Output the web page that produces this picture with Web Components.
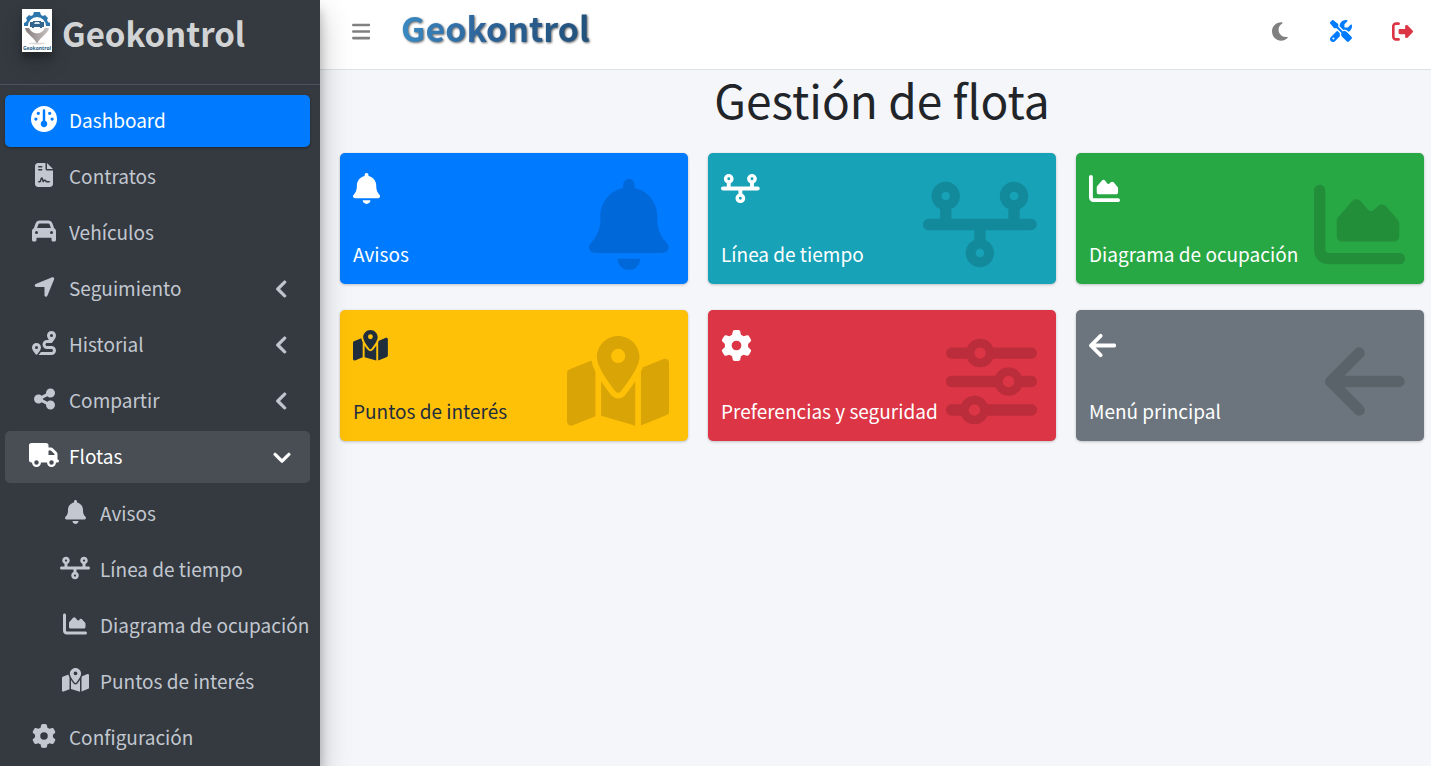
<!DOCTYPE html>
<html lang="es">
<head>
<meta charset="utf-8">
<meta name="viewport" content="width=device-width, initial-scale=1">
<title>Geokontrol - Gestión de flota</title>
<style>
  html, body { margin: 0; }
  body {
    font-family: "Source Sans Pro", "Noto Sans CJK SC", "Noto Sans", sans-serif;
    font-size: 19px;
    line-height: 30px;
    color: #212529;
    background: #f4f6f9;
  }
</style>
</head>
<body>
<geo-app>
  <geo-sidebar slot="sidebar">
    <geo-nav-item icon="gauge" active>Dashboard</geo-nav-item>
    <geo-nav-item icon="contract">Contratos</geo-nav-item>
    <geo-nav-item icon="car">Vehículos</geo-nav-item>
    <geo-nav-item icon="arrow" tree>Seguimiento</geo-nav-item>
    <geo-nav-item icon="route" tree>Historial</geo-nav-item>
    <geo-nav-item icon="share" tree>Compartir</geo-nav-item>
    <geo-nav-item icon="truck" tree open>Flotas
      <geo-nav-item slot="children" icon="bell" nested>Avisos</geo-nav-item>
      <geo-nav-item slot="children" icon="timeline" nested>Línea de tiempo</geo-nav-item>
      <geo-nav-item slot="children" icon="chart" nested>Diagrama de ocupación</geo-nav-item>
      <geo-nav-item slot="children" icon="map" nested>Puntos de interés</geo-nav-item>
    </geo-nav-item>
    <geo-nav-item icon="gear">Configuración</geo-nav-item>
  </geo-sidebar>
  <geo-navbar slot="navbar"></geo-navbar>
  <geo-dashboard>
    <span slot="title">Gestión de flota</span>
    <geo-card color="primary" icon="bell">Avisos</geo-card>
    <geo-card color="info" icon="timeline">Línea de tiempo</geo-card>
    <geo-card color="success" icon="chart">Diagrama de ocupación</geo-card>
    <geo-card color="warning" icon="map">Puntos de interés</geo-card>
    <geo-card color="danger" icon="gear" backdrop="sliders">Preferencias y seguridad</geo-card>
    <geo-card color="secondary" icon="back">Menú principal</geo-card>
  </geo-dashboard>
</geo-app>

<script>
const ICONS = {
  bell: [448, "M224 0c-17.7 0-32 14.3-32 32V51.2C119 66 64 130.6 64 208v18.8c0 47-17.3 92.4-48.5 127.6l-7.4 8.3c-8.4 9.4-10.4 22.9-5.3 34.4S19.4 416 32 416H416c12.6 0 24-7.4 29.2-18.9s3.1-25-5.3-34.4l-7.4-8.3C401.3 319.2 384 273.9 384 226.8V208c0-77.4-55-142-128-156.8V32c0-17.7-14.3-32-32-32zm45.3 493.3c12-12 18.7-28.3 18.7-45.3H224 160c0 17 6.7 33.3 18.7 45.3s28.3 18.7 45.3 18.7s33.3-6.7 45.3-18.7z"],
  timeline: [640, "M128 72a24 24 0 1 1 0 48 24 24 0 1 1 0-48zm32 97.3c28.3-12.3 48-40.5 48-73.3c0-44.2-35.8-80-80-80S48 51.8 48 96c0 32.8 19.7 61 48 73.3V224H32c-17.7 0-32 14.3-32 32s14.3 32 32 32H288v54.7c-28.3 12.3-48 40.5-48 73.3c0 44.2 35.8 80 80 80s80-35.8 80-80c0-32.8-19.7-61-48-73.3V288H608c17.7 0 32-14.3 32-32s-14.3-32-32-32H544V169.3c28.3-12.3 48-40.5 48-73.3c0-44.2-35.8-80-80-80s-80 35.8-80 80c0 32.8 19.7 61 48 73.3V224H160V169.3zM488 96a24 24 0 1 1 48 0 24 24 0 1 1 -48 0zM320 392a24 24 0 1 1 0 48 24 24 0 1 1 0-48z"],
  chart: [512, "M64 64c0-17.7-14.3-32-32-32S0 46.3 0 64V400c0 44.2 35.8 80 80 80H480c17.7 0 32-14.3 32-32s-14.3-32-32-32H80c-8.8 0-16-7.2-16-16V64zm96 288H448c17.7 0 32-14.3 32-32V251.8c0-7.6-2.7-15-7.7-20.8l-65.8-76.8c-12.1-14.2-33.7-15-46.9-1.8l-21 21c-10 10-26.4 9.2-35.4-1.6l-39.2-47c-12.6-15.1-35.7-15.4-48.7-.6L135.9 215c-5.1 5.8-7.9 13.3-7.9 21.1v84c0 17.7 14.3 32 32 32z"],
  map: [576, "M408 120c0 54.6-73.1 151.9-105.2 192c-7.7 9.6-22 9.6-29.6 0C241.1 271.9 168 174.6 168 120C168 53.7 221.7 0 288 0s120 53.7 120 120zm8 80.4c3.5-6.9 6.7-13.8 9.6-20.6c.5-1.2 1-2.5 1.5-3.7l116-46.4C558.9 123.4 576 135 576 152V422.8c0 9.8-6 18.6-15.1 22.3L416 503V200.4zM137.6 138.3c2.4 14.1 7.2 28.3 12.8 41.5c2.9 6.8 6.1 13.7 9.6 20.6V451.8L32.9 502.7C17.1 509 0 497.4 0 480.4V209.6c0-9.8 6-18.6 15.1-22.3l122.6-49zM327.8 332c13.9-17.4 35.7-45.7 56.2-77V504.3L192 449.4V255c20.5 31.3 42.3 59.6 56.2 77c20.5 25.6 59.1 25.6 79.6 0zM288 152a40 40 0 1 0 0-80 40 40 0 1 0 0 80z"],
  gear: [512, "M495.9 166.6c3.2 8.7 .5 18.4-6.4 24.6l-43.3 39.4c1.1 8.3 1.7 16.8 1.7 25.4s-.6 17.1-1.7 25.4l43.3 39.4c6.9 6.2 9.6 15.9 6.4 24.6c-4.4 11.9-9.7 23.3-15.8 34.3l-4.7 8.1c-6.6 11-14 21.4-22.1 31.2c-5.9 7.2-15.7 9.6-24.5 6.8l-55.7-17.7c-13.4 10.3-28.2 18.9-44 25.4l-12.5 57.1c-2 9.1-9 16.3-18.2 17.8c-13.8 2.3-28 3.5-42.5 3.5s-28.7-1.2-42.5-3.5c-9.2-1.5-16.2-8.7-18.2-17.8l-12.5-57.1c-15.8-6.5-30.6-15.1-44-25.4L83.1 425.9c-8.8 2.8-18.6 .3-24.5-6.8c-8.1-9.8-15.5-20.2-22.1-31.2l-4.7-8.1c-6.1-11-11.4-22.4-15.8-34.3c-3.2-8.7-.5-18.4 6.4-24.6l43.3-39.4C64.6 273.1 64 264.6 64 256s.6-17.1 1.7-25.4L22.4 191.2c-6.9-6.2-9.6-15.9-6.4-24.6c4.4-11.9 9.7-23.3 15.8-34.3l4.7-8.1c6.6-11 14-21.4 22.1-31.2c5.9-7.2 15.7-9.6 24.5-6.8l55.7 17.7c13.4-10.3 28.2-18.9 44-25.4l12.5-57.1c2-9.1 9-16.3 18.2-17.8C227.3 1.2 241.5 0 256 0s28.7 1.2 42.5 3.5c9.2 1.5 16.2 8.7 18.2 17.8l12.5 57.1c15.8 6.5 30.6 15.1 44 25.4l55.7-17.7c8.8-2.8 18.6-.3 24.5 6.8c8.1 9.8 15.5 20.2 22.1 31.2l4.7 8.1c6.1 11 11.4 22.4 15.8 34.3zM256 336a80 80 0 1 0 0-160 80 80 0 1 0 0 160z"],
  sliders: [512, "M0 416c0 17.7 14.3 32 32 32l54.7 0c12.3 28.3 40.5 48 73.3 48s61-19.7 73.3-48L480 448c17.7 0 32-14.3 32-32s-14.3-32-32-32l-246.7 0c-12.3-28.3-40.5-48-73.3-48s-61 19.7-73.3 48L32 384c-17.7 0-32 14.3-32 32zm128 0a32 32 0 1 1 64 0 32 32 0 1 1 -64 0zM320 256a32 32 0 1 1 64 0 32 32 0 1 1 -64 0zm32-80c-32.8 0-61 19.7-73.3 48L32 224c-17.7 0-32 14.3-32 32s14.3 32 32 32l246.7 0c12.3 28.3 40.5 48 73.3 48s61-19.7 73.3-48l54.7 0c17.7 0 32-14.3 32-32s-14.3-32-32-32l-54.7 0c-12.3-28.3-40.5-48-73.3-48zM192 128a32 32 0 1 1 0-64 32 32 0 1 1 0 64zm73.3-64C253 35.7 224.8 16 192 16s-61 19.7-73.3 48L32 64C14.3 64 0 78.3 0 96s14.3 32 32 32l86.7 0c12.3 28.3 40.5 48 73.3 48s61-19.7 73.3-48L480 128c17.7 0 32-14.3 32-32s-14.3-32-32-32L265.3 64z"],
  back: [448, "M9.4 233.4c-12.5 12.5-12.5 32.8 0 45.3l160 160c12.5 12.5 32.8 12.5 45.3 0s12.5-32.8 0-45.3L109.2 288 416 288c17.7 0 32-14.3 32-32s-14.3-32-32-32l-306.7 0L214.6 118.6c12.5-12.5 12.5-32.8 0-45.3s-32.8-12.5-45.3 0l-160 160z"],
  gauge: [512, "M0 256a256 256 0 1 1 512 0A256 256 0 1 1 0 256zm320 96c0-26.9-16.5-49.9-40-59.3V88c0-13.3-10.7-24-24-24s-24 10.7-24 24V292.7c-23.5 9.5-40 32.5-40 59.3c0 35.3 28.7 64 64 64s64-28.7 64-64zM144 176a32 32 0 1 0 0-64 32 32 0 1 0 0 64zm-16 80a32 32 0 1 0 -64 0 32 32 0 1 0 64 0zm288 32a32 32 0 1 0 0-64 32 32 0 1 0 0 64zM400 144a32 32 0 1 0 -64 0 32 32 0 1 0 64 0z"],
  contract: [384, "M64 0C28.7 0 0 28.7 0 64V448c0 35.3 28.7 64 64 64H320c35.3 0 64-28.7 64-64V160H256c-17.7 0-32-14.3-32-32V0H64zM256 0V128H384L256 0zM80 64h64c8.8 0 16 7.2 16 16s-7.2 16-16 16H80c-8.8 0-16-7.2-16-16s7.2-16 16-16zm0 64h64c8.8 0 16 7.2 16 16s-7.2 16-16 16H80c-8.8 0-16-7.2-16-16s7.2-16 16-16zm54.2 253.8c-6.1 20.3-24.8 34.2-46 34.2H80c-8.8 0-16-7.2-16-16s7.2-16 16-16h8.2c7.1 0 13.3-4.6 15.3-11.4l14.9-49.5c3.4-11.3 13.8-19.1 25.6-19.1s22.2 7.7 25.6 19.1l11.6 38.6c7.4-6.2 16.8-9.7 26.8-9.7c15.9 0 30.4 9 37.5 23.2l4.4 8.8H304c8.8 0 16 7.2 16 16s-7.2 16-16 16H240c-6.1 0-11.6-3.4-14.3-8.8l-8.8-17.7c-1.7-3.4-5.1-5.5-8.8-5.5s-7.2 2.1-8.8 5.5l-8.8 17.7c-2.9 5.9-9.2 9.4-15.7 8.8s-12.1-5.1-13.9-11.3L144 349l-9.8 32.8z"],
  car: [512, "M135.2 117.4L109.1 192H402.9l-26.1-74.6C372.3 104.6 360.2 96 346.6 96H165.4c-13.6 0-25.7 8.6-30.2 21.4zM39.6 196.8L74.8 96.3C88.3 57.8 124.6 32 165.4 32H346.6c40.8 0 77.1 25.8 90.6 64.3l35.2 100.5c23.2 9.6 39.6 32.5 39.6 59.2V400v48c0 17.7-14.3 32-32 32H448c-17.7 0-32-14.3-32-32V400H96v48c0 17.7-14.3 32-32 32H32c-17.7 0-32-14.3-32-32V400 256c0-26.7 16.4-49.6 39.6-59.2zM128 288a32 32 0 1 0 -64 0 32 32 0 1 0 64 0zm288 32a32 32 0 1 0 0-64 32 32 0 1 0 0 64z"],
  arrow: [448, "M429.6 92.1c4.9-11.9 2.1-25.6-7-34.7s-22.8-11.9-34.7-7l-352 144c-14.2 5.8-22.2 20.8-19.3 35.8s16.1 25.8 31.4 25.8H224V432c0 15.3 10.8 28.4 25.8 31.4s30-5.1 35.8-19.3l144-352z"],
  route: [512, "M512 96c0 50.2-59.1 125.1-84.6 155c-3.8 4.4-9.4 6.1-14.5 5H320c-17.7 0-32 14.3-32 32s14.3 32 32 32h96c53 0 96 43 96 96s-43 96-96 96H139.6c8.7-9.9 19.3-22.6 30-36.8c6.3-8.4 12.8-17.6 19-27.2H416c17.7 0 32-14.3 32-32s-14.3-32-32-32H320c-53 0-96-43-96-96s43-96 96-96h39.8c-21-31.5-39.8-67.7-39.8-96c0-53 43-96 96-96s96 43 96 96zM117.1 489.1c-3.8 4.3-7.2 8.1-10.1 11.3l-1.8 2-.2-.2c-6 4.6-14.6 4-20-1.8C59.8 473 0 402.5 0 352c0-53 43-96 96-96s96 43 96 96c0 30-21.1 67-43.5 97.9c-10.7 14.7-21.7 28-30.8 38.5l-.6 .7zM128 352a32 32 0 1 0 -64 0 32 32 0 1 0 64 0zM416 128a32 32 0 1 0 0-64 32 32 0 1 0 0 64z"],
  share: [448, "M352 224c53 0 96-43 96-96s-43-96-96-96s-96 43-96 96c0 4 .2 8 .7 11.9l-94.1 47C145.4 170.2 121.9 160 96 160c-53 0-96 43-96 96s43 96 96 96c25.9 0 49.4-10.2 66.6-26.9l94.1 47c-.5 3.9-.7 7.8-.7 11.9c0 53 43 96 96 96s96-43 96-96s-43-96-96-96c-25.9 0-49.4 10.2-66.6 26.9l-94.1-47c.5-3.9 .7-7.8 .7-11.9s-.2-8-.7-11.9l94.1-47C302.6 213.8 326.1 224 352 224z"],
  truck: [640, "M48 0C21.5 0 0 21.5 0 48V368c0 26.5 21.5 48 48 48H64c0 53 43 96 96 96s96-43 96-96H384c0 53 43 96 96 96s96-43 96-96h32c17.7 0 32-14.3 32-32s-14.3-32-32-32V288 256 237.3c0-17-6.7-33.3-18.7-45.3L512 114.7c-12-12-28.3-18.7-45.3-18.7H416V48c0-26.5-21.5-48-48-48H48zM416 160h50.7L544 237.3V256H416V160zM112 416a48 48 0 1 1 96 0 48 48 0 1 1 -96 0zm368-48a48 48 0 1 1 0 96 48 48 0 1 1 0-96z"],
  angle: [320, "M41.4 233.4c-12.5 12.5-12.5 32.8 0 45.3l160 160c12.5 12.5 32.8 12.5 45.3 0s12.5-32.8 0-45.3L109.3 256 246.6 118.6c12.5-12.5 12.5-32.8 0-45.3s-32.8-12.5-45.3 0l-160 160z"],
  moon: [384, "M223.5 32C100 32 0 132.3 0 256S100 480 223.5 480c60.6 0 115.5-24.2 155.8-63.4c5-4.9 6.3-12.5 3.1-18.7s-10.1-9.7-17-8.5c-9.8 1.7-19.8 2.6-30.1 2.6c-96.9 0-175.5-78.8-175.5-176c0-65.8 36-123.1 89.3-153.3c6.1-3.5 9.2-10.5 7.7-17.3s-7.3-11.9-14.3-12.5c-6.3-.5-12.6-.8-19-.8z"],
  tools: [512, "M78.6 5C69.1-2.4 55.6-1.5 47 7L7 47c-8.5 8.5-9.4 22-2.1 31.6l80 104c4.5 5.9 11.6 9.4 19 9.4h54.1l109 109c-14.7 29-10 65.4 14.3 89.6l112 112c12.5 12.5 32.8 12.5 45.3 0l64-64c12.5-12.5 12.5-32.8 0-45.3l-112-112c-24.2-24.2-60.6-29-89.6-14.3l-109-109V104c0-7.5-3.5-14.5-9.4-19L78.6 5zM19.9 396.1C7.2 408.8 0 426.1 0 444.1C0 481.6 30.4 512 67.9 512c18 0 35.3-7.2 48-19.9L233.7 374.3c-7.8-20.9-9-43.6-3.6-65.1l-61.7-61.7L19.9 396.1zM512 144c0-10.5-1.1-20.7-3.2-30.5c-2.4-11.2-16.1-14.1-24.2-6l-63.9 63.9c-3 3-7.1 4.7-11.3 4.7H352c-8.8 0-16-7.2-16-16V102.6c0-4.2 1.7-8.3 4.7-11.3l63.9-63.9c8.1-8.1 5.2-21.8-6-24.2C388.7 1.1 378.5 0 368 0C288.5 0 224 64.5 224 144l0 .8 85.3 85.3c36-9.1 75.8 .5 104 28.7L429 274.5c49-23 83-72.8 83-130.5zM56 432a24 24 0 1 1 48 0 24 24 0 1 1 -48 0z"],
  logout: [512, "M377.9 105.9L500.7 228.7c7.2 7.2 11.3 17.1 11.3 27.3s-4.1 20.1-11.3 27.3L377.9 406.1c-6.4 6.4-15 9.9-24 9.9c-18.7 0-33.9-15.2-33.9-33.9l0-62.1-128 0c-17.7 0-32-14.3-32-32l0-64c0-17.7 14.3-32 32-32l128 0 0-62.1c0-18.7 15.2-33.9 33.9-33.9c9 0 17.6 3.6 24 9.9zM160 96L96 96c-17.7 0-32 14.3-32 32l0 256c0 17.7 14.3 32 32 32l64 0c17.7 0 32 14.3 32 32s-14.3 32-32 32l-64 0c-53 0-96-43-96-96L0 128C0 75 43 32 96 32l64 0c17.7 0 32 14.3 32 32s-14.3 32-32 32z"],
  bars: [448, "M0 96C0 78.3 14.3 64 32 64H416c17.7 0 32 14.3 32 32s-14.3 32-32 32H32C14.3 128 0 113.7 0 96zM0 256c0-17.7 14.3-32 32-32H416c17.7 0 32 14.3 32 32s-14.3 32-32 32H32c-17.7 0-32-14.3-32-32zM448 416c0 17.7-14.3 32-32 32H32c-17.7 0-32-14.3-32-32s14.3-32 32-32H416c17.7 0 32 14.3 32 32z"]
};

class GeoElement extends HTMLElement {
  constructor() {
    super();
    this.attachShadow({ mode: "open" });
  }
  connectedCallback() {
    if (!this.shadowRoot.firstChild) this.shadowRoot.innerHTML = this.render();
  }
}

/* Solid glyph, as tall as --size; its width follows the glyph's own view box. */
customElements.define("geo-icon", class extends GeoElement {
  render() {
    const [width, path] = ICONS[this.getAttribute("name")];
    return `
      <style>
        :host { display: inline-flex; flex: none; }
        svg { display: block; height: var(--size, 24px); width: auto; fill: currentColor; }
        :host([name=angle]) path { stroke: currentColor; stroke-width: 16; stroke-linejoin: round; }
      </style>
      <svg viewBox="0 0 ${width} 512" aria-hidden="true"><path d="${path}"/></svg>`;
  }
});

customElements.define("geo-logo", class extends GeoElement {
  render() {
    return `
      <style>
        :host { display: block; flex: none; width: 30px; height: 43px; background: #fff;
          box-shadow: 0 10px 20px rgba(0,0,0,.19), 0 6px 6px rgba(0,0,0,.23); }
        svg { display: block; width: 100%; height: 100%; }
      </style>
      <svg viewBox="0 0 30 43" aria-hidden="true">
        <defs><linearGradient id="pin" x2="1"><stop stop-color="#857d7c"/><stop offset="1" stop-color="#c9c4c3"/></linearGradient></defs>
        <ellipse cx="15" cy="34.5" rx="8" ry="1" fill="#dedbda"/>
        <path d="M3 19h24c-1 6-8 8-12 15.500C11 27 4 25 3 19z" fill="url(#pin)"/>
        <circle cx="15" cy="16" r="8.500" fill="#fff"/>
        <path d="M2 17v-3l2-1 1-2-1-2 3-3 2 1 2-1 1-3h6l1 3 2 1 2-1 3 3-1 2 1 2 2 1v3h-4a9 9 0 0 0-18 0z" fill="#2c76ad"/>
        <path d="M8 13h3v-1h8v1h3v5h-2v1h-2v-1h-6v1h-2v-1H8z" fill="#34658c"/>
        <path d="M12 15l1-2h4l1 2z" fill="#d7e5ef"/>
        <text x="15" y="41" text-anchor="middle" font-family="Open Sans, sans-serif" font-size="5" font-weight="700" fill="#245983">Geokontrol</text>
      </svg>`;
  }
});

customElements.define("geo-app", class extends GeoElement {
  render() {
    return `
      <style>
        :host { display: grid; grid-template-columns: 320px minmax(0, 1fr); min-height: 100vh; }
        .page { min-width: 0; }
      </style>
      <slot name="sidebar"></slot>
      <div class="page"><slot name="navbar"></slot><main><slot></slot></main></div>`;
  }
});

customElements.define("geo-sidebar", class extends GeoElement {
  render() {
    return `
      <style>
        :host { display: block; box-sizing: border-box; position: relative; z-index: 2; color: #c2c7d0; background: #343a40;
          box-shadow: 0 14px 28px rgba(0,0,0,.25), 0 10px 10px rgba(0,0,0,.22); }
        .brand { display: flex; align-items: flex-start; gap: 10px; box-sizing: border-box; height: 85px; padding: 9px 22px;
          border-bottom: 1px solid #4b545c; color: rgba(255,255,255,.8); text-decoration: none; }
        .name { font-size: 33px; line-height: 48px; font-weight: 700; }
        nav { display: flex; flex-direction: column; gap: 4px; padding: 10px 10px 0 5px; }
      </style>
      <a class="brand" href="#"><geo-logo></geo-logo><span class="name">Geokontrol</span></a>
      <nav aria-label="Menú"><slot></slot></nav>`;
  }
});

customElements.define("geo-nav-item", class extends GeoElement {
  render() {
    const tree = this.hasAttribute("tree");
    const open = this.hasAttribute("open");
    return `
      <style>
        :host { display: block; color: #c2c7d0; }
        a { display: flex; align-items: center; box-sizing: border-box; height: 52px; padding: 0 17px 0 20px;
          border-radius: 5px; color: inherit; text-decoration: none; white-space: nowrap; }
        .glyph { display: flex; justify-content: center; width: 38px; margin-right: 6px; padding-bottom: 4px; }
        .label { flex: 1; padding-bottom: 2px; }
        .angle { --size: 22px; display: flex; justify-content: center; width: 22px; }
        :host([nested]) a { padding: 0 0 0 51px; }
        :host([active]) a { color: #fff; background: #007bff; box-shadow: 0 1px 3px rgba(0,0,0,.12), 0 1px 2px rgba(0,0,0,.24); }
        :host([active]) .glyph { --size: 26px; }
        :host([open]) a { color: #fff; background: rgba(255,255,255,.1); }
        :host([open]) .angle { transform: rotate(-90deg); }
        .children { display: flex; flex-direction: column; gap: 4px; padding-top: 5px; }
      </style>
      <a href="#"${tree ? ` aria-expanded="${open}"` : ""}>
        <span class="glyph"><geo-icon name="${this.getAttribute("icon")}"></geo-icon></span>
        <span class="label"><slot></slot></span>
        ${tree ? '<span class="angle"><geo-icon name="angle"></geo-icon></span>' : ""}
      </a>
      ${open ? '<div class="children"><slot name="children"></slot></div>' : ""}`;
  }
});

customElements.define("geo-navbar", class extends GeoElement {
  render() {
    return `
      <style>
        :host { display: block; background: #fff; border-bottom: 1px solid #dee2e6; --size: 21px; }
        header { display: flex; align-items: flex-start; box-sizing: border-box; height: 69px; padding: 6px 8px 0 20px; }
        button, a { display: flex; align-items: center; justify-content: center; width: 42px; height: 50px; padding: 0;
          border: 0; background: none; color: gray; text-decoration: none; cursor: pointer; }
        .wordmark { width: auto; height: 44px; margin-left: 19px; font-size: 34px; line-height: 44px; font-weight: 700;
          color: transparent; background: linear-gradient(90deg, #3a8ac2, #2c6298 45%, #22527b); -webkit-background-clip: text; background-clip: text;
          filter: drop-shadow(1px 1px 1px rgba(0,0,0,.6)); }
        .actions { display: flex; gap: 19px; margin-left: auto; }
        .tools { color: #007bff; --size: 22px; }
        .logout { color: #dc3545; }
      </style>
      <header>
        <button type="button" aria-label="Alternar menú"><geo-icon name="bars"></geo-icon></button>
        <a class="wordmark" href="#">Geokontrol</a>
        <div class="actions">
          <button type="button" aria-label="Modo oscuro"><geo-icon name="moon"></geo-icon></button>
          <button type="button" class="tools" aria-label="Herramientas"><geo-icon name="tools"></geo-icon></button>
          <a class="logout" href="#" aria-label="Salir"><geo-icon name="logout"></geo-icon></a>
        </div>
      </header>`;
  }
});

customElements.define("geo-dashboard", class extends GeoElement {
  render() {
    return `
      <style>
        :host { display: block; padding: 0 7px 26px 20px; }
        h1 { margin: 0 0 25px; font-size: 46px; line-height: 58px; font-weight: 400; text-align: center; }
        .cards { display: grid; grid-template-columns: repeat(3, minmax(0, 1fr)); gap: 26px 20px; }
      </style>
      <h1><slot name="title"></slot></h1>
      <div class="cards"><slot></slot></div>`;
  }
});

customElements.define("geo-card", class extends GeoElement {
  render() {
    const icon = this.getAttribute("icon");
    return `
      <style>
        :host { display: block; --fill: #007bff; color: #fff; }
        :host([color=info]) { --fill: #17a2b8; }
        :host([color=success]) { --fill: #28a745; }
        :host([color=warning]) { --fill: #ffc107; color: #1f2d3d; }
        :host([color=danger]) { --fill: #dc3545; }
        :host([color=secondary]) { --fill: #6c757d; }
        a { display: flex; flex-direction: column; align-items: flex-start; justify-content: space-between; position: relative;
          box-sizing: border-box; min-height: 131px; padding: 20px 13px 15px; border-radius: 5px;
          color: inherit; background: var(--fill); text-decoration: none;
          box-shadow: 0 0 1px rgba(0,0,0,.125), 0 1px 3px rgba(0,0,0,.2); }
        .front { --size: 31px; }
        .backdrop { --size: 91px; position: absolute; top: 26px; right: 19px; color: rgba(0,0,0,.15); }
        .label { position: relative; }
      </style>
      <a href="#">
        <geo-icon class="front" name="${icon}"></geo-icon>
        <geo-icon class="backdrop" name="${this.getAttribute("backdrop") || icon}"></geo-icon>
        <span class="label"><slot></slot></span>
      </a>`;
  }
});
</script>
</body>
</html>
